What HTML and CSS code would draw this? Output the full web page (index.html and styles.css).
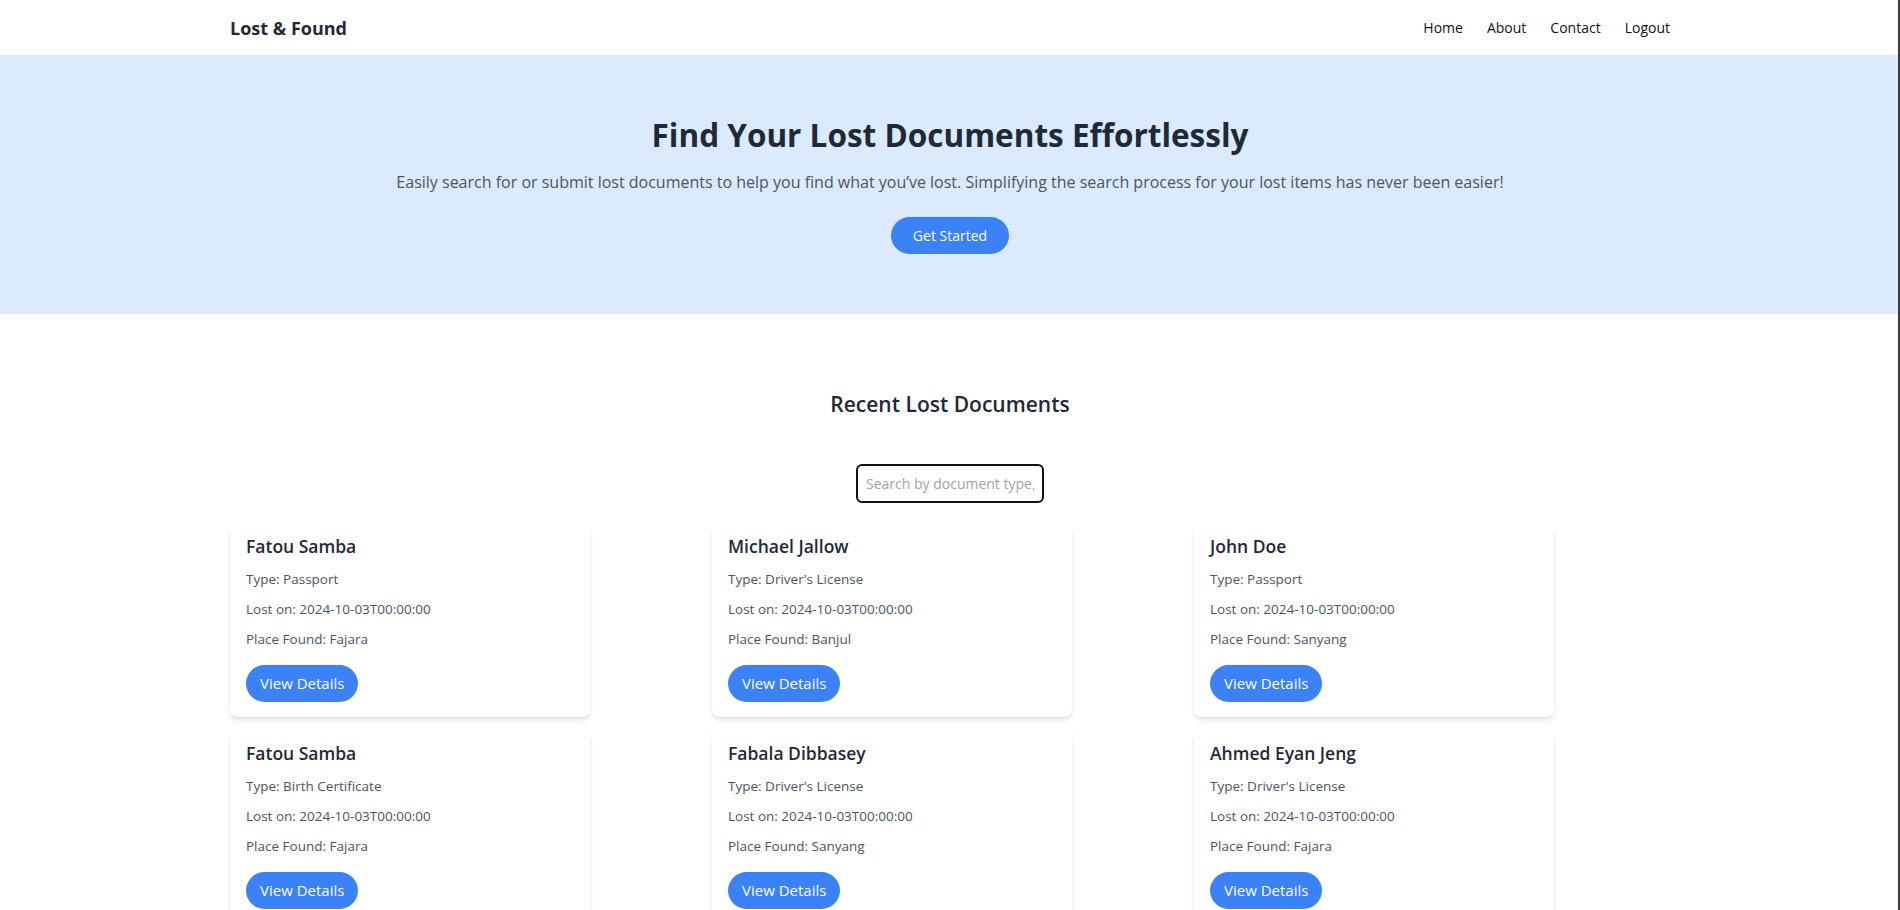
FILE: index.html
```html
<!DOCTYPE html>
<html lang="en">
<head>
<meta charset="utf-8">
<title>Lost &amp; Found</title>
<link rel="stylesheet" href="styles.css">
</head>
<body>
<nav class="nav">
  <div class="container nav-inner">
    <a class="brand" href="#">Lost &amp; Found</a>
    <ul class="links">
      <li><a href="#">Home</a></li>
      <li><a href="#">About</a></li>
      <li><a href="#">Contact</a></li>
      <li><a href="#">Logout</a></li>
    </ul>
  </div>
</nav>
<header class="hero">
  <h1 class="hero-title">Find Your Lost Documents Effortlessly</h1>
  <p class="hero-text">Easily search for or submit lost documents to help you find what you’ve lost. Simplifying the search process for your lost items has never been easier!</p>
  <a class="btn btn-hero" href="#">Get Started</a>
</header>
<main class="container recent">
  <h2 class="recent-title">Recent Lost Documents</h2>
  <div class="search-row">
    <input class="search" type="text" placeholder="Search by document type, name or place">
  </div>
  <div class="grid">
    <div class="card">
      <h3 class="card-title">Fatou Samba</h3>
      <p class="card-line">Type: Passport</p>
      <p class="card-line">Lost on: 2024-10-03T00:00:00</p>
      <p class="card-line">Place Found: Fajara</p>
      <a class="btn btn-card" href="#">View Details</a>
    </div>
    <div class="card">
      <h3 class="card-title">Michael Jallow</h3>
      <p class="card-line">Type: Driver's License</p>
      <p class="card-line">Lost on: 2024-10-03T00:00:00</p>
      <p class="card-line">Place Found: Banjul</p>
      <a class="btn btn-card" href="#">View Details</a>
    </div>
    <div class="card">
      <h3 class="card-title">John Doe</h3>
      <p class="card-line">Type: Passport</p>
      <p class="card-line">Lost on: 2024-10-03T00:00:00</p>
      <p class="card-line">Place Found: Sanyang</p>
      <a class="btn btn-card" href="#">View Details</a>
    </div>
    <div class="card">
      <h3 class="card-title">Fatou Samba</h3>
      <p class="card-line">Type: Birth Certificate</p>
      <p class="card-line">Lost on: 2024-10-03T00:00:00</p>
      <p class="card-line">Place Found: Fajara</p>
      <a class="btn btn-card" href="#">View Details</a>
    </div>
    <div class="card">
      <h3 class="card-title">Fabala Dibbasey</h3>
      <p class="card-line">Type: Driver's License</p>
      <p class="card-line">Lost on: 2024-10-03T00:00:00</p>
      <p class="card-line">Place Found: Sanyang</p>
      <a class="btn btn-card" href="#">View Details</a>
    </div>
    <div class="card">
      <h3 class="card-title">Ahmed Eyan Jeng</h3>
      <p class="card-line">Type: Driver's License</p>
      <p class="card-line">Lost on: 2024-10-03T00:00:00</p>
      <p class="card-line">Place Found: Fajara</p>
      <a class="btn btn-card" href="#">View Details</a>
    </div>
  </div>
</main>
</body>
</html>
```
FILE: styles.css
```css
* { box-sizing: border-box; }

html, body {
  margin: 0;
  padding: 0;
}

body {
  font-family: "Open Sans", "Noto Sans", sans-serif;
  color: #1f2937;
  background: #ffffff;
  overflow: hidden;
}

body::after {
  content: "";
  position: fixed;
  top: 0;
  right: 0;
  width: 2px;
  height: 100%;
  background: #3a3a3a;
}

.container {
  width: 1440px;
  margin: 0 auto;
}

/* NAV */
.nav {
  background: #ffffff;
  height: 55px;
}

.nav-inner {
  height: 55px;
  display: flex;
  align-items: center;
  justify-content: space-between;
}

.brand {
  font-size: 18px;
  font-weight: 700;
  color: #1f2937;
  text-decoration: none;
  line-height: 24px;
}

.links {
  list-style: none;
  margin: 0;
  padding: 0;
  display: flex;
  gap: 24px;
}

.links a {
  font-size: 14px;
  line-height: 24px;
  color: #111111;
  text-decoration: none;
}

/* HERO */
.hero {
  background: #dbeafe;
  padding: 60px 0 60px;
  text-align: center;
}

.hero-title {
  margin: 0;
  font-size: 31.5px;
  line-height: 40px;
  font-weight: 700;
  color: #1f2937;
}

.hero-text {
  margin: 15px 0 0;
  font-size: 16px;
  line-height: 24px;
  color: #4b5563;
}

.btn {
  display: inline-block;
  background: #3b82f6;
  color: #ffffff;
  text-decoration: none;
  border-radius: 999px;
}

.btn-hero {
  margin-top: 23px;
  height: 37px;
  line-height: 37px;
  padding: 0 22px;
  font-size: 14px;
}

/* RECENT */
.recent {
  padding-top: 74px;
}

.recent-title {
  margin: 0;
  text-align: center;
  font-size: 21px;
  line-height: 32px;
  font-weight: 600;
  color: #1f2937;
}

.search-row {
  display: flex;
  justify-content: center;
  margin-top: 44px;
}

.search {
  width: 188px;
  height: 39px;
  border: 2px solid #111111;
  border-radius: 6px;
  padding: 0 8px;
  font-family: inherit;
  font-size: 14px;
  color: #1f2937;
  outline: none;
  background: #ffffff;
}

.search::placeholder {
  color: #9ca3af;
}

.grid {
  margin-top: 19px;
  display: grid;
  grid-template-columns: repeat(3, 360px);
  column-gap: 122px;
  row-gap: 12px;
}

.card {
  background: #ffffff;
  border-radius: 8px;
  padding: 15px 16px 15px;
  box-shadow: 0 4px 6px -1px rgba(0, 0, 0, 0.1), 0 2px 4px -2px rgba(0, 0, 0, 0.1);
  display: flex;
  flex-direction: column;
  align-items: flex-start;
}

.card-title {
  margin: 0;
  font-size: 17.5px;
  line-height: 18px;
  font-weight: 600;
  color: #1f2937;
}

.card-line {
  margin: 10px 0 0;
  font-size: 13.5px;
  line-height: 20px;
  color: #4b5563;
}

.card-title + .card-line {
  margin-top: 14px;
}

.btn-card {
  margin-top: 16px;
  height: 37px;
  line-height: 37px;
  padding: 0 14px;
  font-size: 15px;
  font-weight: 500;
}
```
